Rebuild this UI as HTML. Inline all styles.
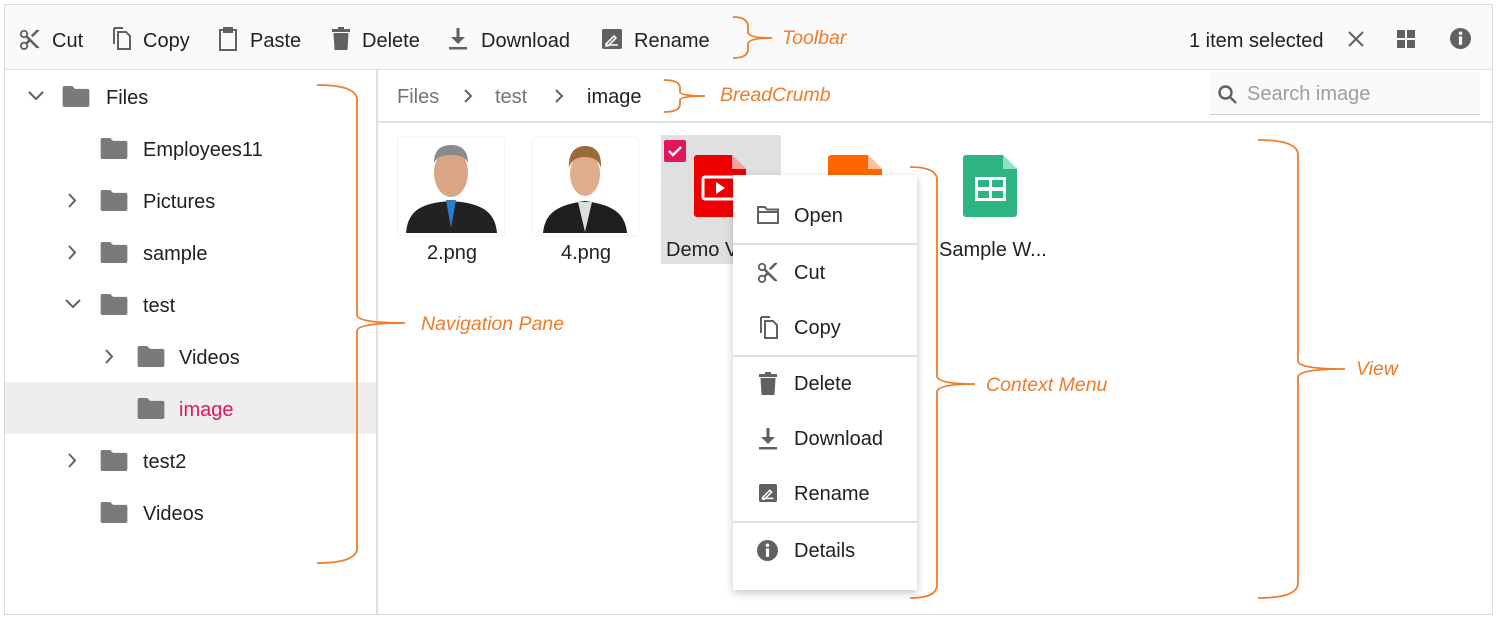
<!DOCTYPE html>
<html><head><meta charset="utf-8">
<style>
*{margin:0;padding:0;box-sizing:border-box}
body{width:1496px;height:619px;background:#fff;position:relative;overflow:hidden;font-family:"Liberation Sans",Arial,sans-serif;color:#212121}
.a{position:absolute}
.t{position:absolute;font-size:20px;line-height:24px;white-space:nowrap;margin-top:1px}
.o{position:absolute;font-style:italic;color:#f07c2a;font-size:19.5px;line-height:22px;white-space:nowrap}
svg.i{position:absolute}
</style></head><body>
<div class="a" style="left:4px;top:4px;width:1489px;height:611px;border:1.5px solid #dcdcdc"></div>
<div class="a" style="left:5px;top:5px;width:1487px;height:65px;background:#fafafa;border-bottom:1.5px solid #e0e0e0"></div>
<div class="a" style="left:376px;top:70px;width:1.5px;height:544px;background:#e0e0e0"></div>
<div class="a" style="left:377px;top:121px;width:1115px;height:1.5px;background:#e0e0e0"></div>

<svg class="i" style="left:19px;top:28px" width="22" height="22" viewBox="0 0 24 24" fill="#616161"><path d="M9.6 8.6c.3-.6.4-1.3.4-2.1C10 4 8 2 5.5 2S1 4 1 6.5 3 11 5.5 11c.8 0 1.5-.2 2.1-.5L10 13l-2.4 2.5C7 15.2 6.3 15 5.5 15 3 15 1 17 1 19.5S3 24 5.5 24 10 22 10 19.5c0-.8-.2-1.5-.5-2.1L12 15l7 7h3v-1L9.6 8.6zM5.5 9a2.5 2.5 0 110-5 2.5 2.5 0 010 5zm0 13a2.5 2.5 0 110-5 2.5 2.5 0 010 5zM19 2l-6 6 2 2 7-7V2z"/></svg>
<div class="t" style="left:52px;top:28px">Cut</div>
<svg class="i" style="left:111px;top:27px" width="22" height="24" viewBox="0 0 22 24" fill="none" stroke="#616161" stroke-width="2"><path d="M3 1v16"/><path d="M3 1h9"/><path d="M7 5h8l4 4v13H7z"/></svg>
<div class="t" style="left:143px;top:28px">Copy</div>
<svg class="i" style="left:219px;top:27px" width="18" height="24" viewBox="0 0 18 24" fill="none" stroke="#616161" stroke-width="2"><path d="M5 3H1v20h16V3h-4"/><rect x="5" y="1" width="8" height="4" fill="#616161"/></svg>
<div class="t" style="left:250px;top:28px">Paste</div>
<svg class="i" style="left:332px;top:27px" width="18" height="24" viewBox="0 0 18 24" fill="#616161"><rect x="0" y="2" width="18" height="3"/><rect x="6" y="0" width="6" height="3"/><path d="M1.5 6h15l-1 17h-13z"/></svg>
<div class="t" style="left:362px;top:28px">Delete</div>
<svg class="i" style="left:449px;top:27px" width="18" height="24" viewBox="0 0 18 24" fill="#616161"><rect x="7.5" y="1" width="3" height="11"/><path d="M2 10h14l-7 7z"/><rect x="0" y="20" width="18" height="2.5"/></svg>
<div class="t" style="left:481px;top:28px">Download</div>
<svg class="i" style="left:602px;top:29px" width="20" height="20" viewBox="0 0 20 20"><rect width="20" height="20" rx="2" fill="#616161"/><path d="M4 15l8-8 2 2-8 8H4z M4 16h12" stroke="#fafafa" stroke-width="1.6" fill="none"/></svg>
<div class="t" style="left:634px;top:28px">Rename</div>

<div class="t" style="left:1189px;top:28px">1 item selected</div>
<svg class="i" style="left:1347px;top:30px" width="18" height="18" viewBox="0 0 18 18" stroke="#616161" stroke-width="2"><path d="M2 2l14 14M16 2L2 16"/></svg>
<svg class="i" style="left:1397px;top:30px" width="18" height="18" viewBox="0 0 18 18" fill="#616161"><rect width="8" height="8"/><rect x="10" width="8" height="8"/><rect y="10" width="8" height="8"/><rect x="10" y="10" width="8" height="8"/></svg>
<svg class="i" style="left:1450px;top:28px" width="21" height="21" viewBox="0 0 20 20"><circle cx="10" cy="10" r="10" fill="#616161"/><rect x="8.5" y="8" width="3" height="8" fill="#fafafa"/><circle cx="10" cy="5" r="1.7" fill="#fafafa"/></svg>

<div class="a" style="left:5px;top:382px;width:371px;height:52px;background:#eeeeee"></div>
<svg class="i" style="left:0;top:0" width="380" height="619" viewBox="0 0 380 619" fill="none" stroke="#616161" stroke-width="2">
<path d="M29 92l7 7 7-7"/>
<path d="M69 194l6 6.5-6 6.5"/><path d="M69 246l6 6.5-6 6.5"/>
<path d="M66 300l7 7 7-7"/><path d="M106 350l6 6.5-6 6.5"/><path d="M69 454l6 6.5-6 6.5"/>
</svg>
<svg width="0" height="0" style="position:absolute"><defs><symbol id="fd" viewBox="0 0 28 22"><path d="M0 2a2 2 0 012-2h8l3 3h13a2 2 0 012 2v15a2 2 0 01-2 2H2a2 2 0 01-2-2z" fill="#7a7a7a"/></symbol></defs></svg>
<svg class="i" style="left:62px;top:86px" width="28" height="21"><use href="#fd"/></svg>
<div class="t" style="left:106px;top:85px">Files</div>
<svg class="i" style="left:100px;top:138px" width="28" height="21"><use href="#fd"/></svg>
<div class="t" style="left:143px;top:137px">Employees11</div>
<svg class="i" style="left:100px;top:190px" width="28" height="21"><use href="#fd"/></svg>
<div class="t" style="left:143px;top:189px">Pictures</div>
<svg class="i" style="left:100px;top:242px" width="28" height="21"><use href="#fd"/></svg>
<div class="t" style="left:143px;top:241px">sample</div>
<svg class="i" style="left:100px;top:294px" width="28" height="21"><use href="#fd"/></svg>
<div class="t" style="left:143px;top:293px">test</div>
<svg class="i" style="left:137px;top:346px" width="28" height="21"><use href="#fd"/></svg>
<div class="t" style="left:179px;top:345px">Videos</div>
<svg class="i" style="left:137px;top:398px" width="28" height="21"><use href="#fd"/></svg>
<div class="t" style="left:179px;top:397px;color:#e3165b">image</div>
<svg class="i" style="left:100px;top:450px" width="28" height="21"><use href="#fd"/></svg>
<div class="t" style="left:143px;top:449px">test2</div>
<svg class="i" style="left:100px;top:502px" width="28" height="21"><use href="#fd"/></svg>
<div class="t" style="left:143px;top:501px">Videos</div>

<div class="t" style="left:397px;top:84px;color:#757575">Files</div>
<svg class="i" style="left:462px;top:88px" width="12" height="16" fill="none" stroke="#616161" stroke-width="2"><path d="M3 2l6 6-6 6"/></svg>
<div class="t" style="left:495px;top:84px;color:#757575">test</div>
<svg class="i" style="left:553px;top:88px" width="12" height="16" fill="none" stroke="#616161" stroke-width="2"><path d="M3 2l6 6-6 6"/></svg>
<div class="t" style="left:587px;top:84px">image</div>
<div class="a" style="left:1210px;top:72px;width:270px;height:43px;background:#fafafa;border-bottom:1.5px solid #d0d0d0"></div>
<svg class="i" style="left:1217px;top:84px" width="22" height="22" viewBox="0 0 22 22" fill="none" stroke="#616161" stroke-width="2.4"><circle cx="8.5" cy="8.5" r="6"/><path d="M13 13l6 6"/></svg>
<div class="t" style="left:1247px;top:81px;color:#9e9e9e">Search image</div>

<div class="a" style="left:398px;top:138px;width:106px;height:97px;background:#fff;box-shadow:0 0 2px #ddd;overflow:hidden">
<svg width="106" height="97" viewBox="0 0 106 97"><path d="M8 95c2-22 14-30 45-32 30 2 44 10 46 32z" fill="#222"/><path d="M48 62l5 28 5-28z" fill="#2a7fc9"/><ellipse cx="53" cy="35" rx="17" ry="24" fill="#d9a586"/><path d="M36 25c0-14 8-18 17-18s17 4 17 18c-3-6-8-8-17-8s-14 2-17 8z" fill="#8a8a8a"/></svg></div>
<div class="t" style="left:427px;top:240px">2.png</div>
<div class="a" style="left:533px;top:138px;width:105px;height:97px;background:#fff;box-shadow:0 0 2px #ddd;overflow:hidden">
<svg width="105" height="97" viewBox="0 0 105 97"><path d="M10 95c2-20 14-28 42-32 28 4 40 12 42 32z" fill="#1e1e1e"/><path d="M45 64l7 30 7-30z" fill="#ddd"/><ellipse cx="52" cy="36" rx="15" ry="22" fill="#e0ad8c"/><path d="M36 30c-1-16 7-22 16-22s17 5 16 22c-2-8-8-11-16-11s-14 3-16 11z" fill="#9a6a3a"/></svg></div>
<div class="t" style="left:561px;top:240px">4.png</div>

<div class="a" style="left:661px;top:135px;width:120px;height:129px;background:#e0e0e0"></div>
<div class="a" style="left:664px;top:140px;width:22px;height:22px;background:#e3165b;border-radius:2px"></div>
<svg class="i" style="left:664px;top:140px" width="22" height="22" fill="none" stroke="#fff" stroke-width="2.4"><path d="M5 11l4 4 8-8"/></svg>
<svg class="i" style="left:694px;top:155px" width="52" height="62" viewBox="0 0 52 62"><path d="M0 3a3 3 0 013-3h35l14 14v45a3 3 0 01-3 3H3a3 3 0 01-3-3z" fill="#e00"/><path d="M38 0v14h14z" fill="#f8a0a0"/><rect x="9" y="22" width="34" height="22" rx="2" fill="none" stroke="#fff" stroke-width="3"/><path d="M22 27v12l9-6z" fill="#fff"/></svg>
<div class="t" style="left:666px;top:237px">Demo V</div>
<svg class="i" style="left:828px;top:155px" width="54" height="62" viewBox="0 0 54 62"><path d="M0 3a3 3 0 013-3h37l14 14v45a3 3 0 01-3 3H3a3 3 0 01-3-3z" fill="#f60"/><path d="M40 0v14h14z" fill="#fcc29a"/></svg>
<svg class="i" style="left:963px;top:155px" width="54" height="62" viewBox="0 0 54 62"><path d="M0 3a3 3 0 013-3h37l14 14v45a3 3 0 01-3 3H3a3 3 0 01-3-3z" fill="#2db482"/><path d="M40 0v14h14z" fill="#94e0c2"/><rect x="12" y="22" width="31" height="24" fill="#fff"/><rect x="15" y="25" width="11" height="7" fill="#2db482"/><rect x="29" y="25" width="11" height="7" fill="#2db482"/><rect x="15" y="36" width="11" height="7" fill="#2db482"/><rect x="29" y="36" width="11" height="7" fill="#2db482"/></svg>
<div class="t" style="left:939px;top:237px">Sample W...</div>

<div class="a" style="left:733px;top:175px;width:184px;height:415px;background:#fff;box-shadow:0 3px 8px rgba(0,0,0,.22)"></div>
<div class="a" style="left:733px;top:243px;width:184px;height:1.5px;background:#e0e0e0"></div>
<div class="a" style="left:733px;top:355px;width:184px;height:1.5px;background:#e0e0e0"></div>
<div class="a" style="left:733px;top:521px;width:184px;height:1.5px;background:#e0e0e0"></div>
<svg class="i" style="left:757px;top:206px" width="22" height="18" viewBox="0 0 22 18" fill="none" stroke="#616161" stroke-width="2"><path d="M1 1h7l2 2.5h11V17H1z"/><path d="M1 6h20"/></svg>
<div class="t" style="left:794px;top:203px">Open</div>
<svg class="i" style="left:757px;top:261px" width="22" height="22" viewBox="0 0 24 24" fill="#616161"><path d="M9.6 8.6c.3-.6.4-1.3.4-2.1C10 4 8 2 5.5 2S1 4 1 6.5 3 11 5.5 11c.8 0 1.5-.2 2.1-.5L10 13l-2.4 2.5C7 15.2 6.3 15 5.5 15 3 15 1 17 1 19.5S3 24 5.5 24 10 22 10 19.5c0-.8-.2-1.5-.5-2.1L12 15l7 7h3v-1L9.6 8.6zM5.5 9a2.5 2.5 0 110-5 2.5 2.5 0 010 5zm0 13a2.5 2.5 0 110-5 2.5 2.5 0 010 5zM19 2l-6 6 2 2 7-7V2z"/></svg>
<div class="t" style="left:794px;top:260px">Cut</div>
<svg class="i" style="left:758px;top:316px" width="22" height="24" viewBox="0 0 22 24" fill="none" stroke="#616161" stroke-width="2"><path d="M3 1v16"/><path d="M3 1h9"/><path d="M7 5h8l4 4v13H7z"/></svg>
<div class="t" style="left:794px;top:315px">Copy</div>
<svg class="i" style="left:759px;top:372px" width="18" height="24" viewBox="0 0 18 24" fill="#616161"><rect x="0" y="2" width="18" height="3"/><rect x="6" y="0" width="6" height="3"/><path d="M1.5 6h15l-1 17h-13z"/></svg>
<div class="t" style="left:794px;top:371px">Delete</div>
<svg class="i" style="left:759px;top:427px" width="18" height="24" viewBox="0 0 18 24" fill="#616161"><rect x="7.5" y="1" width="3" height="11"/><path d="M2 10h14l-7 7z"/><rect x="0" y="20" width="18" height="2.5"/></svg>
<div class="t" style="left:794px;top:426px">Download</div>
<svg class="i" style="left:759px;top:484px" width="18" height="18" viewBox="0 0 20 20"><rect width="20" height="20" rx="2" fill="#616161"/><path d="M4 15l8-8 2 2-8 8H4z M4 16h12" stroke="#fff" stroke-width="1.6" fill="none"/></svg>
<div class="t" style="left:794px;top:481px">Rename</div>
<svg class="i" style="left:757px;top:540px" width="21" height="21" viewBox="0 0 20 20"><circle cx="10" cy="10" r="10" fill="#616161"/><rect x="8.5" y="8" width="3" height="8" fill="#fff"/><circle cx="10" cy="5" r="1.7" fill="#fff"/></svg>
<div class="t" style="left:794px;top:538px">Details</div>

<svg class="i" style="left:0;top:0" width="1496" height="619" fill="none" stroke="#f07c2a" stroke-width="1.8">
<path d="M733 17Q748 17 748 27L748 32Q748 38 772 38Q748 38 748 44L748 49Q748 58 733 58"/>
<path d="M664 80Q680 80 680 88L680 92Q680 96 705 96Q680 96 680 100L680 104Q680 112 664 112"/>
<path d="M317 85Q357 85 357 100L357 315Q357 323 405 323Q357 323 357 331L357 548Q357 563 317 563"/>
<path d="M910 167Q937 167 937 180L937 376Q937 384 975 384Q937 384 937 392L937 585Q937 598 910 598"/>
<path d="M1258 140Q1298 140 1298 155L1298 361Q1298 369 1345 369Q1298 369 1298 377L1298 583Q1298 598 1258 598"/>
</svg>
<div class="o" style="left:782px;top:27px">Toolbar</div>
<div class="o" style="left:720px;top:84px">BreadCrumb</div>
<div class="o" style="left:421px;top:313px">Navigation Pane</div>
<div class="o" style="left:986px;top:374px">Context Menu</div>
<div class="o" style="left:1356px;top:358px">View</div>
</body></html>
